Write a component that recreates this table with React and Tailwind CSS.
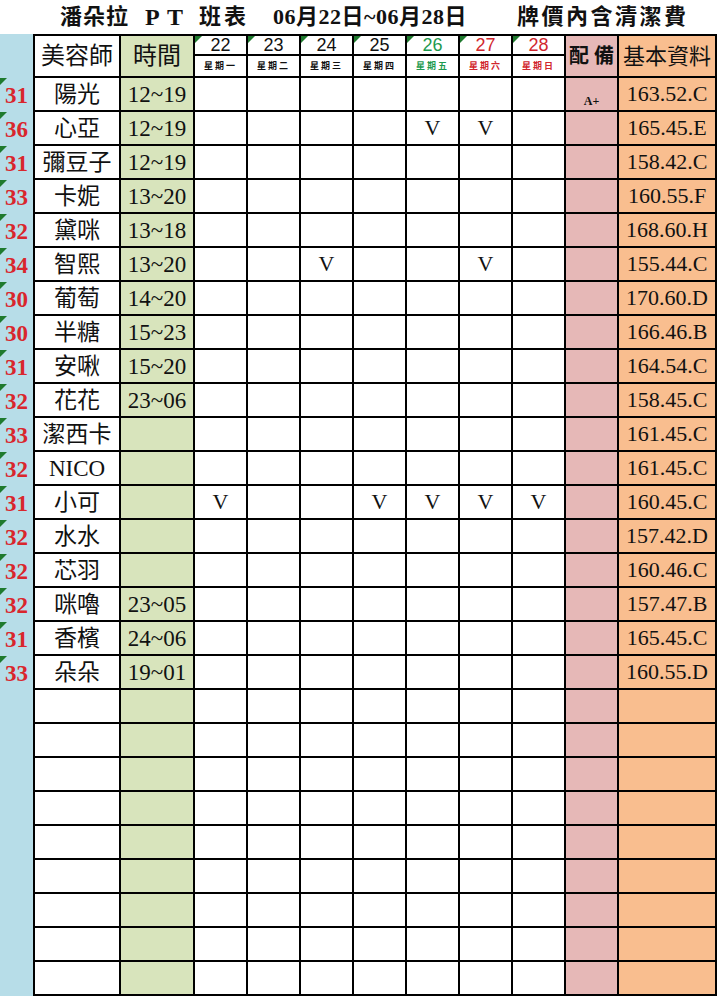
import React from "react";

const days = [
  { d: 22, w: "星期一", c: "text-[#111]" },
  { d: 23, w: "星期二", c: "text-[#111]" },
  { d: 24, w: "星期三", c: "text-[#111]" },
  { d: 25, w: "星期四", c: "text-[#111]" },
  { d: 26, w: "星期五", c: "text-[#1d9a4f]" },
  { d: 27, w: "星期六", c: "text-[#d1262d]" },
  { d: 28, w: "星期日", c: "text-[#d1262d]" },
];

// v: indexes of days (0 = 22) marked with V
const staff = [
  { no: 31, name: "陽光", time: "12~19", v: [], gear: "A+", info: "163.52.C" },
  { no: 36, name: "心亞", time: "12~19", v: [4, 5], info: "165.45.E" },
  { no: 31, name: "彌豆子", time: "12~19", v: [], info: "158.42.C" },
  { no: 33, name: "卡妮", time: "13~20", v: [], info: "160.55.F" },
  { no: 32, name: "黛咪", time: "13~18", v: [], info: "168.60.H" },
  { no: 34, name: "智熙", time: "13~20", v: [2, 5], info: "155.44.C" },
  { no: 30, name: "葡萄", time: "14~20", v: [], info: "170.60.D" },
  { no: 30, name: "半糖", time: "15~23", v: [], info: "166.46.B" },
  { no: 31, name: "安啾", time: "15~20", v: [], info: "164.54.C" },
  { no: 32, name: "花花", time: "23~06", v: [], info: "158.45.C" },
  { no: 33, name: "潔西卡", time: "", v: [], info: "161.45.C" },
  { no: 32, name: "NICO", time: "", v: [], info: "161.45.C" },
  { no: 31, name: "小可", time: "", v: [0, 3, 4, 5, 6], info: "160.45.C" },
  { no: 32, name: "水水", time: "", v: [], info: "157.42.D" },
  { no: 32, name: "芯羽", time: "", v: [], info: "160.46.C" },
  { no: 32, name: "咪嚕", time: "23~05", v: [], info: "157.47.B" },
  { no: 31, name: "香檳", time: "24~06", v: [], info: "165.45.C" },
  { no: 33, name: "朵朵", time: "19~01", v: [], info: "160.55.D" },
];

const emptyRows = 9;

const cols = "grid grid-cols-[35px_86px_74px_repeat(8,53px)_98px]";
const cell = "border-r-2 border-b-2 border-black flex items-center justify-center";

function Tick() {
  return (
    <svg className="absolute left-0 top-0" width="7" height="7" viewBox="0 0 7 7">
      <polygon points="0,0 7,0 0,7" fill="#1f7a2e" />
    </svg>
  );
}

function Title() {
  return (
    <div className="h-[34px] flex items-center font-bold text-[22px] text-[#111] leading-none whitespace-nowrap">
      <span className="ml-[60px] w-[85px] tracking-[1px]">潘朵拉</span>
      <span className="w-[22px] text-[24px]">P</span>
      <span className="w-[32px] text-[24px]">T</span>
      <span className="w-[74px] tracking-[3px]">班表</span>
      <span className="w-[244px] tracking-[0.5px]">06月22日~06月28日</span>
      <span className="tracking-[2.5px]">牌價內含清潔費</span>
    </div>
  );
}

function Header() {
  return (
    <div className={`${cols} grid-rows-[22px_22px]`}>
      <div className="row-span-2 bg-[#b7dde8] border-r-2 border-black" />
      <div className={`${cell} row-span-2 border-t-2 text-[24px]`}>美容師</div>
      <div className={`${cell} row-span-2 border-t-2 bg-[#d8e4bc] text-[24px]`}>時間</div>
      {days.map((d) => (
        <div
          key={d.d}
          className={`${cell} relative border-t-2 font-['Liberation_Sans',sans-serif] text-[18px] leading-none ${d.c}`}
        >
          <Tick />
          {d.d}
        </div>
      ))}
      <div className={`${cell} row-span-2 border-t-2 bg-[#e6b8b7] text-[20px] font-bold`} style={{ gridColumn: 11, gridRow: "1 / span 2" }}>
        配 備
      </div>
      <div className={`${cell} row-span-2 border-t-2 bg-[#f9be8f] text-[22px]`} style={{ gridColumn: 12, gridRow: "1 / span 2" }}>
        基本資料
      </div>
      {days.map((d, i) => (
        <div
          key={d.w}
          className={`${cell} text-[9px] font-bold tracking-[2px] leading-none ${d.c}`}
          style={{ gridColumn: 4 + i, gridRow: 2 }}
        >
          {d.w}
        </div>
      ))}
    </div>
  );
}

function Row({ s }) {
  return (
    <div className={`${cols} h-[34px]`}>
      <div className="relative bg-[#b7dde8] border-r-2 border-black flex items-center justify-center">
        {s && <Tick />}
        {s && <span className="text-[23px] font-bold text-[#d9262c] leading-none">{s.no}</span>}
      </div>
      <div className={`${cell} text-[23px] leading-none`}>{s ? s.name : ""}</div>
      <div className={`${cell} bg-[#d8e4bc] text-[23px] leading-none`}>{s ? s.time : ""}</div>
      {days.map((d, i) => (
        <div key={d.d} className={`${cell} text-[22px] leading-none`}>
          {s && s.v.includes(i) ? "V" : ""}
        </div>
      ))}
      <div className={`${cell} bg-[#e6b8b7] items-end pb-[3px] text-[12px] font-bold leading-none`}>
        {s && s.gear ? s.gear : ""}
      </div>
      <div className={`${cell} bg-[#f9be8f] text-[22px] leading-none`}>{s ? s.info : ""}</div>
    </div>
  );
}

export default function App() {
  return (
    <div className="w-[719px] h-[996px] overflow-hidden bg-white text-[#111] font-['Liberation_Serif','Noto_Sans_CJK_TC',serif]">
      <Title />
      <Header />
      {staff.map((s, i) => (
        <Row key={i} s={s} />
      ))}
      {Array.from({ length: emptyRows }).map((_, i) => (
        <Row key={"e" + i} s={null} />
      ))}
    </div>
  );
}
